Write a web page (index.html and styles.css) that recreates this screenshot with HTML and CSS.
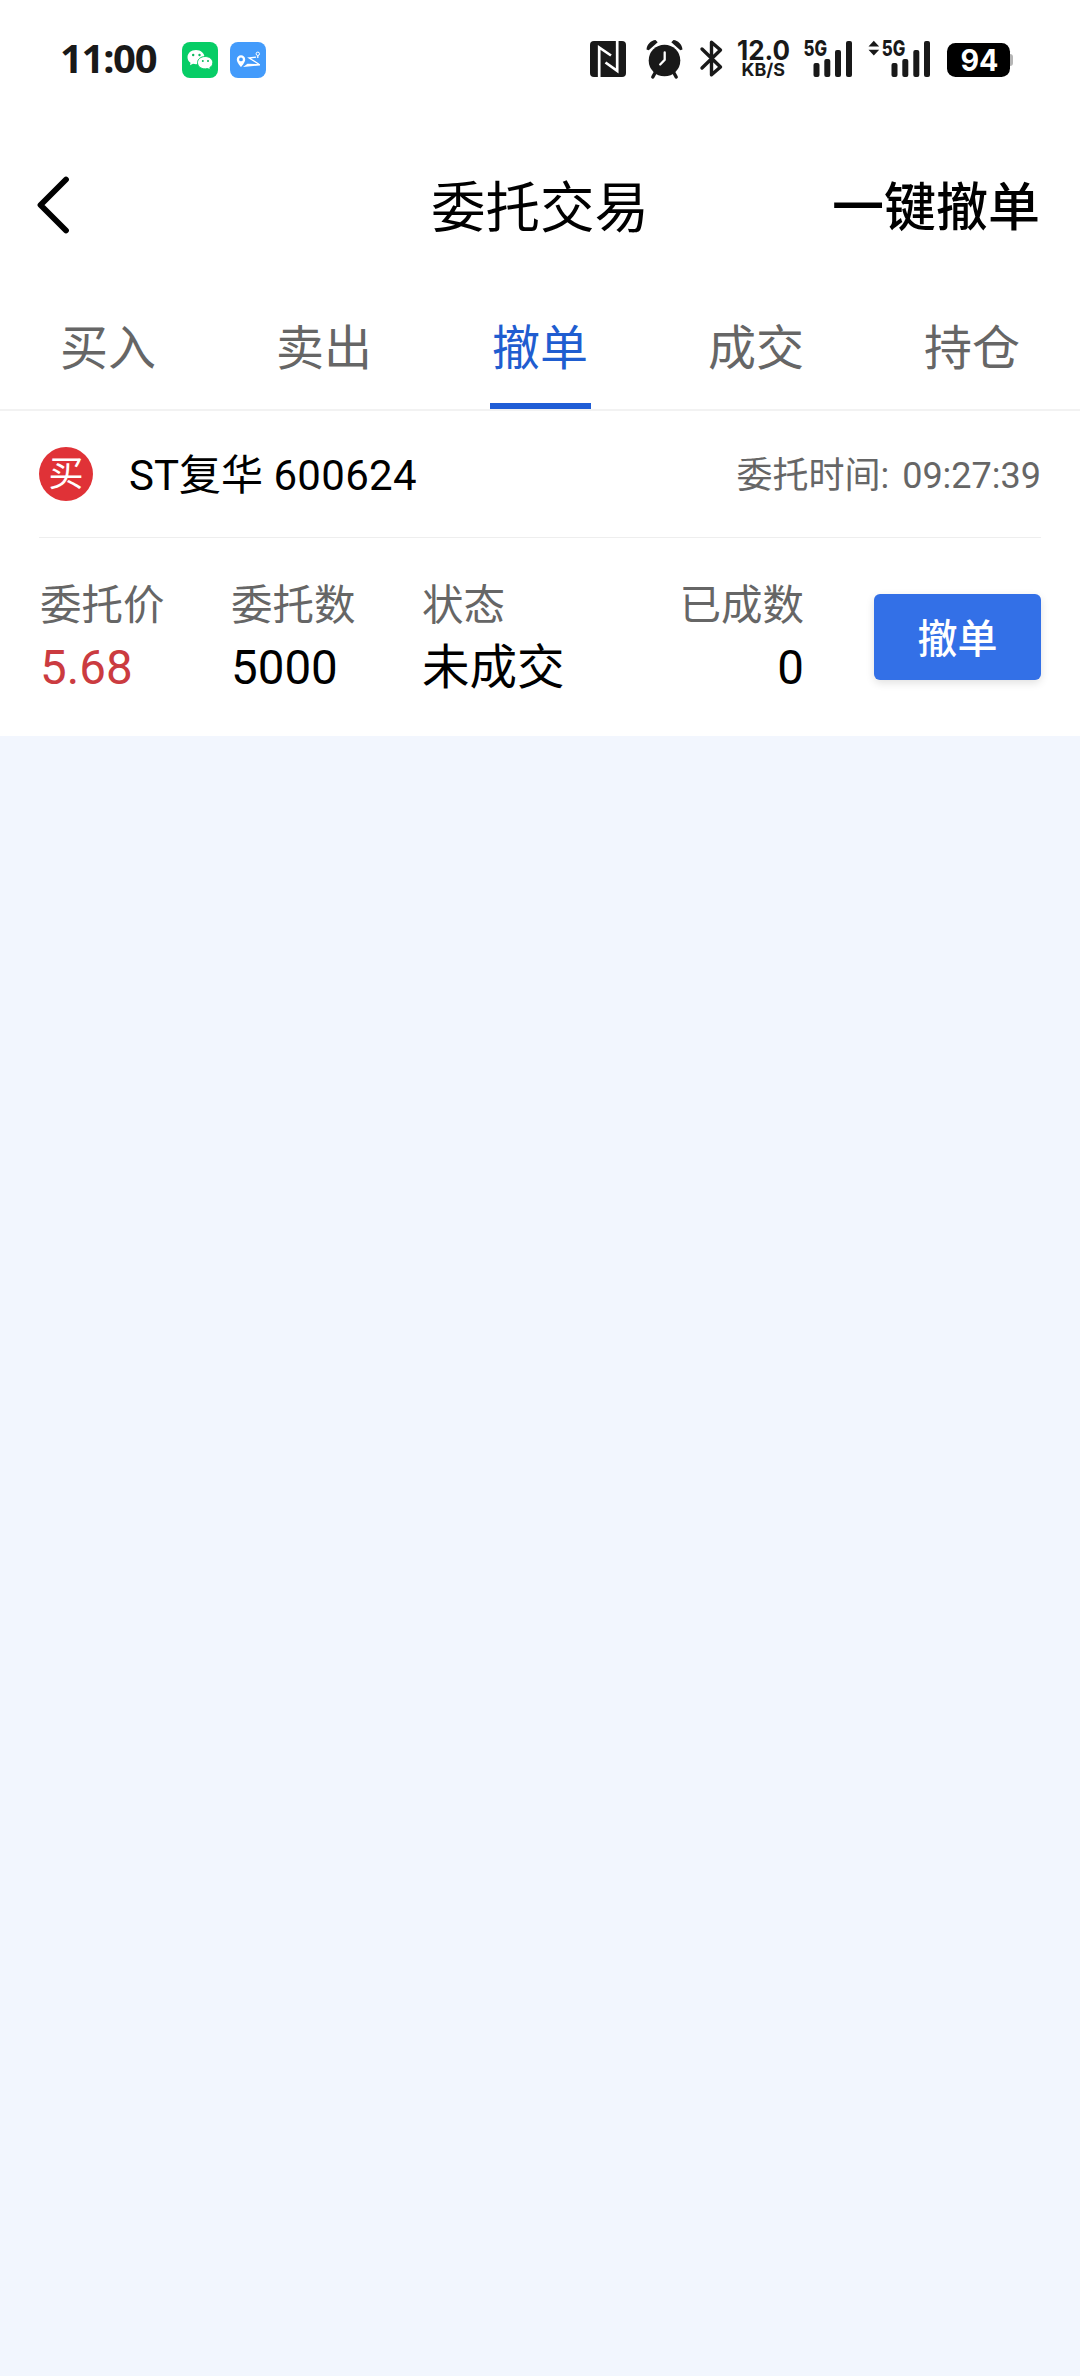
FILE: index.html
```html
<!DOCTYPE html>
<html lang="zh-CN">
<head>
<meta charset="utf-8">
<title>委托交易</title>
<link rel="stylesheet" href="styles.css">
</head>
<body>
<div class="status">
  <span class="clock">11:00</span>
  <svg class="app wechat" width="36" height="36" viewBox="0 0 36 36">
    <rect width="36" height="36" rx="8" fill="#07cd66"/>
    <path d="M14 8c-5 0-8.500 3.200-8.500 7.200 0 2.300 1.200 4.200 3 5.500l-.5 2.600 3-1.500c1 .3 2 .4 3 .4 5 0 8.500-3.100 8.500-7S19 8 14 8z" fill="#fff"/>
    <path d="M23.200 14.500c-4.400 0-7.700 2.700-7.700 6.200s3.300 6.200 7.700 6.200c.9 0 1.700-.1 2.500-.3l2.600 1.300-.5-2.300c1.800-1.100 3-2.800 3-4.900 0-3.500-3.300-6.200-7.600-6.200z" fill="#fff" stroke="#07cd66" stroke-width="1"/>
    <g fill="#07b95c"><circle cx="11.200" cy="13" r="1.200"/><circle cx="17.500" cy="13" r="1.200"/><circle cx="20.800" cy="19" r="1"/><circle cx="26" cy="19" r="1"/></g>
  </svg>
  <svg class="app route" width="36" height="36" viewBox="0 0 36 36">
    <rect width="36" height="36" rx="8" fill="#439bfb"/>
    <path fill-rule="evenodd" d="M11 13.200a4.200 4.200 0 0 0-4.200 4.200c0 2.900 4.200 7.600 4.200 7.600s4.200-4.700 4.200-7.600A4.200 4.200 0 0 0 11 13.200zm0 2.300a1.900 1.900 0 1 1 0 3.800 1.900 1.900 0 0 1 0-3.800z" fill="#fff"/>
    <circle cx="27.800" cy="11.800" r="1.700" fill="none" stroke="#fff"/>
    <path d="M27.800 13.500v2.500M26 15.200l-7 .8 10 6.200" fill="none" stroke="#fff" stroke-width="1.300"/>
    <path d="M13 25l4.500-3.200L30 22v1.500z" fill="#fff"/>
  </svg>
  <div class="tray">
    <svg class="nfc" width="36" height="36" viewBox="0 0 36 36">
      <rect width="36" height="36" rx="4" fill="#191919"/>
      <path d="M9.200 36V6.500L21 14.500M27.200 0v29.800L15.500 21.500" fill="none" stroke="#fff" stroke-width="2.700"/>
    </svg>
    <svg class="alarm" width="37" height="38" viewBox="0 0 37 38">
      <circle cx="18.500" cy="20.500" r="15.800" fill="#191919"/>
      <path d="M.5 9.500C1 4 5 .5 9.500 0l2.200 2.300L2.700 10.200zM36.500 9.500C36 4 32 .5 27.500 0l-2.200 2.300 9 7.900z" fill="#191919"/>
      <path d="M9 33l-2.200 4M28 33l2.200 4" stroke="#191919" stroke-width="3.400" stroke-linecap="round"/>
      <path d="M18.700 12.500v7.300l-4.500 4.700" fill="none" stroke="#fff" stroke-width="2.300" stroke-linecap="round"/>
    </svg>
    <svg class="bt" width="23" height="37" viewBox="0 0 23 37">
      <path d="M2 9l18.500 18-9 7.800V2.200L20.500 10 2 28" fill="none" stroke="#191919" stroke-width="3.400" stroke-linejoin="round" stroke-linecap="round"/>
    </svg>
    <svg class="speed" width="54" height="38" viewBox="0 0 54 38">
      <text x="0" y="19.800" textLength="53" lengthAdjust="spacingAndGlyphs" font-size="26.500" font-weight="700">12.0</text>
      <text x="4.500" y="36" textLength="43.500" lengthAdjust="spacingAndGlyphs" font-size="17.500" font-weight="700">KB/S</text>
    </svg>
    <svg class="signal" width="50" height="37" viewBox="0 0 50 37">
      <text x="-.5" y="15.500" textLength="23.500" lengthAdjust="spacingAndGlyphs" font-size="21" font-weight="800">5G</text>
      <g fill="#191919"><rect x="9.500" y="23" width="6" height="14" rx="2"/><rect x="20.300" y="19" width="6" height="18" rx="2"/><rect x="31" y="10" width="6" height="27" rx="2"/><rect x="42" y="1" width="6" height="36" rx="2"/></g>
    </svg>
    <svg class="signal-data" width="64" height="37" viewBox="0 0 64 37">
      <path d="M.5 6.500L5.800.8 11.200 6.500zM.5 9.800h10.700L5.800 15.500z" fill="#191919"/>
      <text x="13.800" y="15.500" textLength="23.500" lengthAdjust="spacingAndGlyphs" font-size="21" font-weight="800">5G</text>
      <g fill="#191919"><rect x="23.500" y="23" width="6" height="14" rx="2"/><rect x="34.300" y="19" width="6" height="18" rx="2"/><rect x="45.300" y="10" width="6" height="27" rx="2"/><rect x="56" y="1" width="6" height="36" rx="2"/></g>
    </svg>
    <svg class="battery" width="66" height="34" viewBox="0 0 66 34">
      <rect x="58" y="11" width="8" height="12" rx="3" fill="#b5b5b5"/>
      <rect width="63" height="34" rx="8.500" fill="#000"/>
      <text class="level" x="13.500" y="28" textLength="38" lengthAdjust="spacingAndGlyphs" font-size="30" font-weight="700">94</text>
    </svg>
  </div>
</div>

<header class="nav">
  <svg class="back" width="34" height="60" viewBox="0 0 34 60">
    <path d="M29 4.500L3.500 30 29 55.500" fill="none" stroke="#000" stroke-width="5.800" stroke-linecap="round" stroke-linejoin="round"/>
  </svg>
  <h1 class="title">委托交易</h1>
  <span class="cancel-all">一键撤单</span>
</header>

<nav class="tabs">
  <span class="tab">买入</span>
  <span class="tab">卖出</span>
  <span class="tab active">撤单</span>
  <span class="tab">成交</span>
  <span class="tab">持仓</span>
</nav>

<section class="order">
  <div class="order-head">
    <span class="side">买</span>
    <span class="stock">ST复华 <span class="code">600624</span></span>
    <span class="time"><span class="time-label">委托时间:</span>09:27:39</span>
  </div>
  <div class="order-body">
    <div class="field"><span class="label">委托价</span><span class="value price">5.68</span></div>
    <div class="field"><span class="label">委托数</span><span class="value">5000</span></div>
    <div class="field"><span class="label">状态</span><span class="value">未成交</span></div>
    <div class="field end"><span class="label">已成数</span><span class="value">0</span></div>
    <button class="cancel">撤单</button>
  </div>
</section>
</body>
</html>
```
FILE: styles.css
```css
* { box-sizing: border-box; }
body {
  margin: 0;
  width: 1080px;
  min-height: 2376px;
  background: #f2f6fe;
  color: #000;
  font-family: Roboto, "Noto Sans CJK SC", sans-serif;
}
svg { display: block; flex: none; overflow: visible; }

.status {
  display: flex;
  align-items: flex-start;
  height: 120px;
  padding: 40px 67px 0 60px;
  background: #fff;
}
.status text { font-family: Inter, sans-serif; fill: #191919; }
.status .level { fill: #fff; }
.clock {
  width: 122px;
  margin-top: -2px;
  font: 700 40px/40px "Noto Sans", sans-serif;
  letter-spacing: -1.3px;
  color: #191919;
  white-space: nowrap;
}
.app { margin-top: 2px; }
.route { margin-left: 12px; }
.tray { display: flex; margin-left: auto; }
.nfc { margin: 1px 20px 0 0; }
.alarm { margin-right: 17px; }
.bt { margin-right: 14px; }
.speed { margin-right: 13px; }
.signal { margin-right: 14px; }
.signal-data { margin-right: 15px; }
.battery { margin-top: 3px; }

.nav {
  display: grid;
  grid-template-columns: 1fr auto 1fr;
  align-items: center;
  height: 170px;
  padding: 0 40px 0 40px;
  background: #fff;
}
.back { margin-left: -3px; }
.title { margin: 0; font-size: 54.500px; line-height: 80px; font-weight: 400; padding-top: 6px; }
.cancel-all { justify-self: end; font-size: 52px; line-height: 80px; font-weight: 500; padding-top: 7px; }

.tabs {
  display: grid;
  grid-template-columns: repeat(5, 1fr);
  height: 121px;
  background: #fff;
  border-bottom: 2px solid #f2f2f2;
}
.tab {
  display: flex;
  flex-direction: column;
  align-items: center;
  justify-content: space-between;
  padding-top: 23px;
  font-size: 48px;
  line-height: 72px;
  color: #666;
}
.active { color: #1f5dd0; }
.active::after { content: ""; width: 101px; height: 6px; background: #1f5dd6; }

.order { height: 325px; padding: 0 39px; background: #fff; }
.order-head {
  display: flex;
  align-items: center;
  height: 127px;
  border-bottom: 1px solid #eee;
}
.side {
  width: 54px;
  height: 54px;
  border-radius: 50%;
  background: #e03237;
  color: #fff;
  font-size: 35px;
  line-height: 56px;
  text-align: center;
}
.stock { margin-left: 36px; padding-top: 4px; font-size: 42px; line-height: 60px; }
.code { letter-spacing: .3px; }
.time { display: flex; margin-left: auto; padding-top: 4px; font-size: 36px; line-height: 54px; color: #666; }
.time-label { margin-right: 13px; }

.order-body {
  display: grid;
  grid-template-columns: 191px 191px 190px 192px 1fr;
  padding: 37px 0 0 1px;
}
.field { display: flex; flex-direction: column; }
.end { align-items: flex-end; }
.label { font-size: 41.500px; line-height: 62px; color: #666; }
.value { font-size: 47.500px; line-height: 62px; }
.price { color: #cb3b40; }
.cancel {
  justify-self: end;
  width: 167px;
  height: 86px;
  margin-top: 19px;
  padding: 5px 0 0;
  border: 0;
  border-radius: 6px;
  background: #3370e7;
  box-shadow: 0 3px 8px rgba(0, 0, 0, .12);
  color: #fff;
  font: 500 40px/81px Roboto, "Noto Sans CJK SC", sans-serif;
}
```
